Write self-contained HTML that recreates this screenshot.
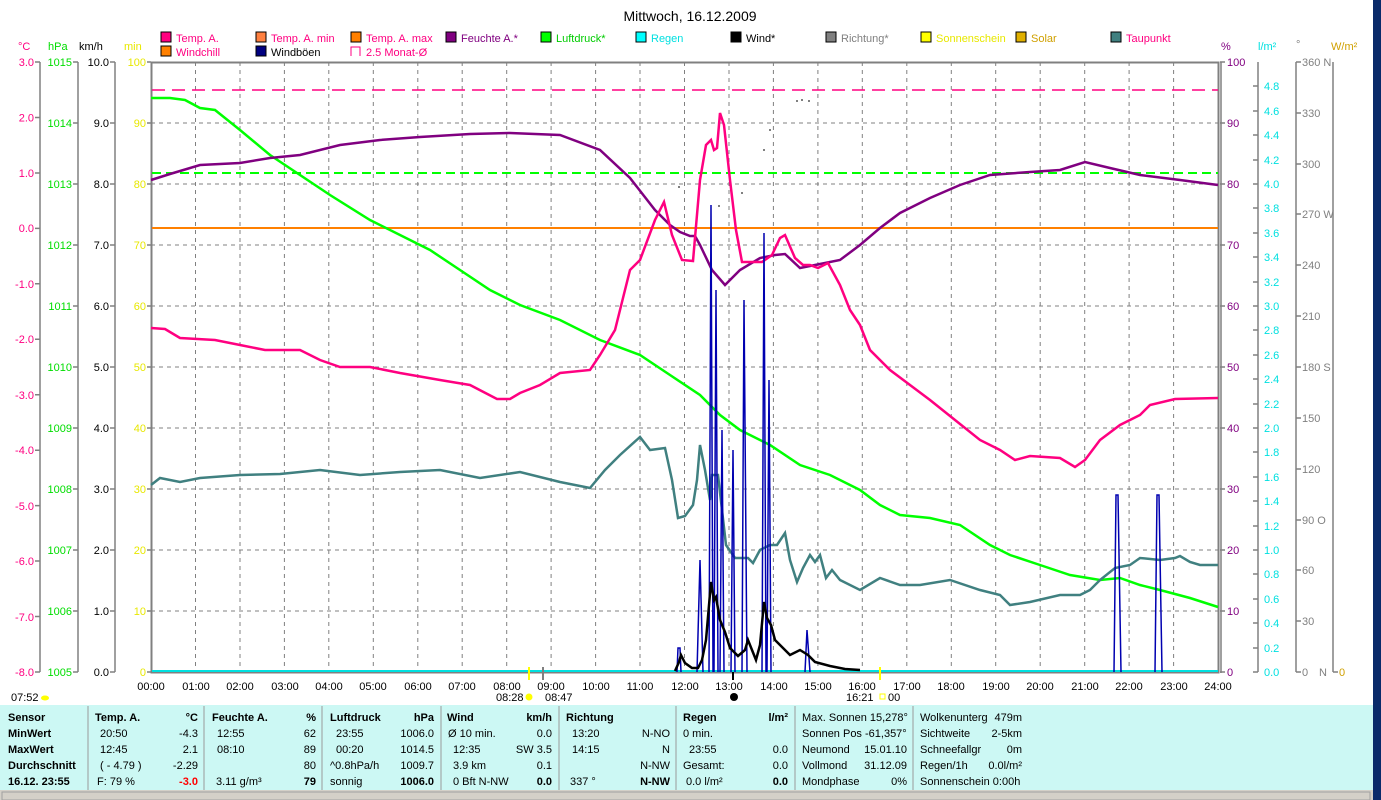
<!DOCTYPE html>
<html><head><meta charset="utf-8"><style>
body{margin:0;width:1381px;height:800px;overflow:hidden;background:#fff;font-family:"Liberation Sans",sans-serif;}
svg text{font-family:"Liberation Sans",sans-serif;}
</style></head><body>
<svg width="1381" height="800" xmlns="http://www.w3.org/2000/svg" style="position:absolute;left:0;top:0">
<rect width="1381" height="800" fill="#fff"/>
<rect x="1373" y="0" width="8" height="800" fill="#0a2a6a"/>
<text x="690" y="21" font-size="14" text-anchor="middle" fill="#000">Mittwoch, 16.12.2009</text>

<g font-size="11">
<rect x="161" y="32" width="10" height="10" fill="#ff0080" stroke="#000"/><text x="176" y="42" fill="#ff0080">Temp. A.</text>
<rect x="256" y="32" width="10" height="10" fill="#ff8040" stroke="#000"/><text x="271" y="42" fill="#ff0080">Temp. A. min</text>
<rect x="351" y="32" width="10" height="10" fill="#ff8000" stroke="#000"/><text x="366" y="42" fill="#ff0080">Temp. A. max</text>
<rect x="446" y="32" width="10" height="10" fill="#800080" stroke="#000"/><text x="461" y="42" fill="#800080">Feuchte A.*</text>
<rect x="541" y="32" width="10" height="10" fill="#00ff00" stroke="#000"/><text x="556" y="42" fill="#00cc00">Luftdruck*</text>
<rect x="636" y="32" width="10" height="10" fill="#00ffff" stroke="#000"/><text x="651" y="42" fill="#00e0e0">Regen</text>
<rect x="731" y="32" width="10" height="10" fill="#000" stroke="#000"/><text x="746" y="42" fill="#000">Wind*</text>
<rect x="826" y="32" width="10" height="10" fill="#808080" stroke="#000"/><text x="841" y="42" fill="#808080">Richtung*</text>
<rect x="921" y="32" width="10" height="10" fill="#ffff00" stroke="#000"/><text x="936" y="42" fill="#e8e800">Sonnenschein</text>
<rect x="1016" y="32" width="10" height="10" fill="#e0b000" stroke="#000"/><text x="1031" y="42" fill="#d0a000">Solar</text>
<rect x="1111" y="32" width="10" height="10" fill="#408080" stroke="#000"/><text x="1126" y="42" fill="#ff0080">Taupunkt</text>
<rect x="161" y="46" width="10" height="10" fill="#ff8000" stroke="#000"/><text x="176" y="56" fill="#ff0080">Windchill</text>
<rect x="256" y="46" width="10" height="10" fill="#000080" stroke="#000"/><text x="271" y="56" fill="#000">Windböen</text>
<path d="M351 56V47H360V56" fill="none" stroke="#ff0080"/><text x="366" y="56" fill="#ff0080">2.5 Monat-Ø</text>
</g>

<g font-size="11">
<text x="18" y="50" fill="#ff0080">°C</text>
<text x="48" y="50" fill="#00dd00">hPa</text>
<text x="79" y="50" fill="#000">km/h</text>
<text x="124" y="50" fill="#e8e800">min</text>
<text x="1221" y="50" fill="#800080">%</text>
<text x="1258" y="50" fill="#00e0e0">l/m²</text>
<text x="1296" y="48" fill="#808080">°</text>
<text x="1331" y="50" fill="#d0a000">W/m²</text>
</g>

<g stroke="#808080" stroke-width="1.5">
<line x1="40" y1="62" x2="40" y2="672"/>
<line x1="78" y1="62" x2="78" y2="672"/>
<line x1="115" y1="62" x2="115" y2="672"/>
<line x1="1258" y1="62" x2="1258" y2="672"/>
<line x1="1296" y1="62" x2="1296" y2="672"/>
<line x1="1333" y1="62" x2="1333" y2="672"/>
</g>
<g stroke="#808080" stroke-width="1.5">
<path d="M35 62h5M35 117.5h5M35 173h5M35 228.4h5M35 283.8h5M35 339.3h5M35 394.7h5M35 450.2h5M35 505.6h5M35 561h5M35 616.5h5M35 672h5"/>
<path d="M73 62h5M73 123h5M73 184h5M73 245h5M73 306h5M73 367h5M73 428h5M73 489h5M73 550h5M73 611h5M73 672h5"/>
<path d="M110 62h5M110 123h5M110 184h5M110 245h5M110 306h5M110 367h5M110 428h5M110 489h5M110 550h5M110 611h5M110 672h5"/>
<path d="M147 62h4M147 123h4M147 184h4M147 245h4M147 306h4M147 367h4M147 428h4M147 489h4M147 550h4M147 611h4M147 672h4"/>
<path d="M1220 62h5M1220 123h5M1220 184h5M1220 245h5M1220 306h5M1220 367h5M1220 428h5M1220 489h5M1220 550h5M1220 611h5M1220 672h5"/>
<path d="M1253 86h5M1253 111h5M1253 135h5M1253 160h5M1253 184h5M1253 208h5M1253 233h5M1253 257h5M1253 282h5M1253 306h5M1253 330h5M1253 355h5M1253 379h5M1253 404h5M1253 428h5M1253 452h5M1253 477h5M1253 501h5M1253 526h5M1253 550h5M1253 574h5M1253 599h5M1253 623h5M1253 648h5M1253 672h5"/>
<path d="M1296 62h5M1296 113h5M1296 164h5M1296 214h5M1296 265h5M1296 316h5M1296 367h5M1296 418h5M1296 469h5M1296 520h5M1296 570h5M1296 621h5M1296 672h5"/>
<path d="M1333 672h5"/>
</g>
<g font-size="11" text-anchor="end">
<g fill="#ff0080"><text x="34" y="66">3.0</text><text x="34" y="121.5">2.0</text><text x="34" y="177">1.0</text><text x="34" y="232">0.0</text><text x="34" y="288">-1.0</text><text x="34" y="343">-2.0</text><text x="34" y="399">-3.0</text><text x="34" y="454">-4.0</text><text x="34" y="510">-5.0</text><text x="34" y="565">-6.0</text><text x="34" y="621">-7.0</text><text x="34" y="676">-8.0</text></g>
<g fill="#00dd00"><text x="72" y="66">1015</text><text x="72" y="127">1014</text><text x="72" y="188">1013</text><text x="72" y="249">1012</text><text x="72" y="310">1011</text><text x="72" y="371">1010</text><text x="72" y="432">1009</text><text x="72" y="493">1008</text><text x="72" y="554">1007</text><text x="72" y="615">1006</text><text x="72" y="676">1005</text></g>
<g fill="#000"><text x="109" y="66">10.0</text><text x="109" y="127">9.0</text><text x="109" y="188">8.0</text><text x="109" y="249">7.0</text><text x="109" y="310">6.0</text><text x="109" y="371">5.0</text><text x="109" y="432">4.0</text><text x="109" y="493">3.0</text><text x="109" y="554">2.0</text><text x="109" y="615">1.0</text><text x="109" y="676">0.0</text></g>
<g fill="#e8e800"><text x="146" y="66">100</text><text x="146" y="127">90</text><text x="146" y="188">80</text><text x="146" y="249">70</text><text x="146" y="310">60</text><text x="146" y="371">50</text><text x="146" y="432">40</text><text x="146" y="493">30</text><text x="146" y="554">20</text><text x="146" y="615">10</text><text x="146" y="676">0</text></g>
</g>
<g font-size="11">
<g fill="#800080"><text x="1227" y="66">100</text><text x="1227" y="127">90</text><text x="1227" y="188">80</text><text x="1227" y="249">70</text><text x="1227" y="310">60</text><text x="1227" y="371">50</text><text x="1227" y="432">40</text><text x="1227" y="493">30</text><text x="1227" y="554">20</text><text x="1227" y="615">10</text><text x="1227" y="676">0</text></g>
<g fill="#00e0e0"><text x="1264" y="90">4.8</text><text x="1264" y="115">4.6</text><text x="1264" y="139">4.4</text><text x="1264" y="164">4.2</text><text x="1264" y="188">4.0</text><text x="1264" y="212">3.8</text><text x="1264" y="237">3.6</text><text x="1264" y="261">3.4</text><text x="1264" y="286">3.2</text><text x="1264" y="310">3.0</text><text x="1264" y="334">2.8</text><text x="1264" y="359">2.6</text><text x="1264" y="383">2.4</text><text x="1264" y="408">2.2</text><text x="1264" y="432">2.0</text><text x="1264" y="456">1.8</text><text x="1264" y="481">1.6</text><text x="1264" y="505">1.4</text><text x="1264" y="530">1.2</text><text x="1264" y="554">1.0</text><text x="1264" y="578">0.8</text><text x="1264" y="603">0.6</text><text x="1264" y="627">0.4</text><text x="1264" y="652">0.2</text><text x="1264" y="676">0.0</text></g>
<g fill="#808080"><text x="1302" y="66">360 N</text><text x="1302" y="117">330</text><text x="1302" y="168">300</text><text x="1302" y="218">270 W</text><text x="1302" y="269">240</text><text x="1302" y="320">210</text><text x="1302" y="371">180 S</text><text x="1302" y="422">150</text><text x="1302" y="473">120</text><text x="1302" y="524">90  O</text><text x="1302" y="574">60</text><text x="1302" y="625">30</text><text x="1302" y="676">0</text><text x="1319" y="676">N</text></g>
<text x="1339" y="676" fill="#d0a000">0</text>
</g>

<g stroke="#808080" stroke-dasharray="4,4" stroke-width="1">
<path d="M151 123H1218M151 184H1218M151 245H1218M151 306H1218M151 367H1218M151 428H1218M151 489H1218M151 550H1218M151 611H1218"/>
<path d="M195.5 62V672M240 62V672M284.4 62V672M328.8 62V672M373.3 62V672M417.8 62V672M462.2 62V672M506.7 62V672M551.1 62V672M595.6 62V672M640 62V672M684.5 62V672M729 62V672M773.4 62V672M817.9 62V672M862.3 62V672M906.8 62V672M951.3 62V672M995.7 62V672M1040.2 62V672M1084.7 62V672M1129.1 62V672M1173.6 62V672"/>
</g>
<rect x="151.5" y="62.5" width="1067" height="610" fill="none" stroke="#808080" stroke-width="2"/>
<line x1="1221" y1="62" x2="1221" y2="673" stroke="#808080" stroke-width="1.5"/>

<line x1="152" y1="90" x2="1218" y2="90" stroke="#ff0080" stroke-width="1.5" stroke-dasharray="13,7"/>
<line x1="152" y1="173" x2="1218" y2="173" stroke="#00ff00" stroke-width="2" stroke-dasharray="9,5"/>
<line x1="152" y1="228" x2="1218" y2="228" stroke="#ff8000" stroke-width="2"/>

<g fill="#808080"><rect x="796" y="100" width="2" height="2"/><rect x="801" y="99" width="2" height="2"/><rect x="808" y="100" width="2" height="2"/><rect x="769" y="129" width="2" height="2"/><rect x="763" y="149" width="2" height="2"/><rect x="741" y="192" width="2" height="2"/><rect x="678" y="186" width="2" height="2"/><rect x="718" y="205" width="2" height="2"/></g>

<polyline fill="none" stroke="#00ff00" stroke-width="2.5" points="151,98 170,98 185,100 200,108 215,110 240,130 270,155 300,175 330,195 370,220 400,235 430,250 460,270 490,290 520,305 560,320 600,340 640,355 670,375 700,395 720,415 740,430 770,445 800,465 830,475 860,490 880,505 900,515 930,518 960,525 990,545 1010,555 1040,565 1070,575 1100,580 1120,578 1140,585 1160,590 1190,598 1218,607"/>
<polyline fill="none" stroke="#408080" stroke-width="2.5" points="151,485 160,478 180,482 200,478 240,475 280,474 320,470 360,475 400,472 440,470 480,478 520,472 560,482 590,488 605,470 620,455 640,437 650,450 665,448 672,480 678,518 685,516 693,505 697,480 700,445 705,470 710,500 712,475 718,475 726,545 735,558 748,558 753,563 760,550 770,545 777,545 785,533 790,560 797,582 803,568 810,555 815,562 820,555 826,578 832,570 840,580 860,590 880,578 900,585 920,585 950,580 980,590 1000,595 1010,605 1030,602 1060,595 1080,595 1090,590 1100,580 1115,568 1130,565 1140,558 1160,560 1175,558 1180,556 1190,562 1200,565 1218,565"/>
<polyline fill="none" stroke="#800080" stroke-width="2.5" points="151,180 170,174 200,165 240,163 270,158 300,155 340,145 380,140 420,137 470,134 510,133 560,135 600,150 630,178 655,210 670,225 680,232 690,236 695,236 700,245 712,270 725,285 740,270 760,258 775,255 785,254 800,268 820,264 840,260 860,245 880,228 900,213 930,198 960,185 990,175 1030,172 1060,170 1085,162 1110,168 1140,175 1180,180 1218,185"/>
<polyline fill="none" stroke="#ff0080" stroke-width="2.5" points="151,328 165,329 180,338 215,340 240,345 265,350 300,350 320,360 340,367 370,367 400,373 440,380 470,385 497,399 510,399 520,393 540,385 560,373 590,370 600,355 615,330 630,270 640,260 655,220 664,202 672,235 682,260 693,261 700,180 706,145 711,140 714,150 717,148 720,113 724,125 730,180 736,230 742,262 752,262 762,262 772,255 780,238 785,235 795,258 803,265 810,265 818,268 828,263 840,285 850,310 860,325 870,350 890,370 910,385 930,400 955,420 980,440 1000,450 1015,460 1030,456 1060,458 1075,467 1085,460 1100,440 1120,425 1140,415 1150,405 1175,399 1218,398"/>
<line x1="152" y1="671" x2="1218" y2="671" stroke="#00e0e0" stroke-width="2"/>
<g fill="none" stroke="#0000b0" stroke-width="1.5">
<path d="M677 672L678 648L680 648L681 672"/>
<path d="M697 672L700 560L703 672"/>
<path d="M709 672L711 205L713 672M714 672L716 290L718 672"/>
<path d="M720 672L722 430L724 672"/>
<path d="M731 672L733 450L735 672"/>
<path d="M742 672L744 300L747 672"/>
<path d="M762 672L764 233L766 672M767 672L769 380L771 672"/>
<path d="M805 672L807 630L810 672"/>
<path d="M1114 672L1116 495L1118 495L1121 672"/>
<path d="M1155 672L1157 495L1159 495L1162 672"/>
</g>
<polyline fill="none" stroke="#000" stroke-width="2.5" points="675,671 679,662 681,655 685,663 692,668 698,668 702,660 706,640 711,582 714,600 716,597 720,620 725,632 730,648 738,656 745,650 748,640 752,650 756,660 760,645 764,602 767,618 771,625 775,640 780,645 790,655 800,650 808,655 815,662 830,666 845,669 860,670"/>

<g font-size="11" text-anchor="middle" fill="#000">
<text x="151" y="690">00:00</text><text x="196" y="690">01:00</text><text x="240" y="690">02:00</text><text x="285" y="690">03:00</text><text x="329" y="690">04:00</text><text x="373" y="690">05:00</text><text x="418" y="690">06:00</text><text x="462" y="690">07:00</text><text x="507" y="690">08:00</text><text x="551" y="690">09:00</text><text x="596" y="690">10:00</text><text x="640" y="690">11:00</text><text x="685" y="690">12:00</text><text x="729" y="690">13:00</text><text x="774" y="690">14:00</text><text x="818" y="690">15:00</text><text x="862" y="690">16:00</text><text x="907" y="690">17:00</text><text x="951" y="690">18:00</text><text x="996" y="690">19:00</text><text x="1040" y="690">20:00</text><text x="1085" y="690">21:00</text><text x="1129" y="690">22:00</text><text x="1174" y="690">23:00</text><text x="1218" y="690">24:00</text>
</g>
<g stroke-width="2"><line x1="529" y1="667" x2="529" y2="680" stroke="#ffff00"/><line x1="543" y1="667" x2="543" y2="680" stroke="#808080"/><line x1="880" y1="667" x2="880" y2="680" stroke="#ffff00"/><line x1="733" y1="672" x2="733" y2="680" stroke="#000"/></g>
<g font-size="11" fill="#000">
<text x="11" y="701">07:52</text><ellipse cx="45" cy="698" rx="4" ry="2.5" fill="#ffff00"/>
<text x="496" y="701">08:28</text><circle cx="529" cy="697" r="3.5" fill="#ffff00"/>
<text x="545" y="701">08:47</text>
<circle cx="734" cy="697" r="4" fill="#000"/>
<text x="846" y="701">16:21</text><rect x="880" y="694" width="5" height="5" fill="none" stroke="#ffff00"/><text x="888" y="701">00</text>
</g>

<rect x="0" y="705" width="1373" height="85" fill="#ccf8f4"/>
<rect x="0" y="790" width="1373" height="10" fill="#d4d0c8"/>
<rect x="2" y="792" width="1368" height="8" fill="none" stroke="#a0a0a0"/>
<g stroke="#9a9a9a"><path d="M88 706V790M204 706V790M322 706V790M441 706V790M559 706V790M676 706V790M795 706V790M913 706V790"/></g>
<g font-size="11" fill="#000">
<g font-weight="bold"><text x="8" y="721">Sensor</text><text x="8" y="737">MinWert</text><text x="8" y="753">MaxWert</text><text x="8" y="769">Durchschnitt</text><text x="8" y="785">16.12. 23:55</text>
<text x="95" y="721">Temp. A.</text><text x="212" y="721">Feuchte A.</text><text x="330" y="721">Luftdruck</text><text x="447" y="721">Wind</text><text x="566" y="721">Richtung</text><text x="683" y="721">Regen</text></g>
<text x="100" y="737">20:50</text><text x="100" y="753">12:45</text><text x="100" y="769">( - 4.79 )</text><text x="97" y="785">F: 79 %</text>
<text x="217" y="737">12:55</text><text x="217" y="753">08:10</text><text x="216" y="785">3.11 g/m³</text>
<text x="336" y="737">23:55</text><text x="336" y="753">00:20</text><text x="330" y="769">^0.8hPa/h</text><text x="330" y="785">sonnig</text>
<text x="448" y="737">Ø 10 min.</text><text x="453" y="753">12:35</text><text x="453" y="769">3.9 km</text><text x="453" y="785">0 Bft N-NW</text>
<text x="572" y="737">13:20</text><text x="572" y="753">14:15</text><text x="570" y="785">337 °</text>
<text x="683" y="737">0 min.</text><text x="689" y="753">23:55</text><text x="683" y="769">Gesamt:</text><text x="686" y="785">0.0 l/m²</text>
<text x="802" y="721">Max. Sonnen 15,278°</text><text x="802" y="737">Sonnen Pos  -61,357°</text><text x="802" y="753">Neumond</text><text x="802" y="769">Vollmond</text><text x="802" y="785">Mondphase</text>
<text x="920" y="721">Wolkenunterg</text><text x="920" y="737">Sichtweite</text><text x="920" y="753">Schneefallgr</text><text x="920" y="769">Regen/1h</text><text x="920" y="785">Sonnenschein  0:00h</text>
<g text-anchor="end">
<text x="198" y="721" font-weight="bold">°C</text><text x="198" y="737">-4.3</text><text x="198" y="753">2.1</text><text x="198" y="769">-2.29</text><text x="198" y="785" fill="#ff0000" font-weight="bold">-3.0</text>
<text x="316" y="721" font-weight="bold">%</text><text x="316" y="737">62</text><text x="316" y="753">89</text><text x="316" y="769">80</text><text x="316" y="785" font-weight="bold">79</text>
<text x="434" y="721" font-weight="bold">hPa</text><text x="434" y="737">1006.0</text><text x="434" y="753">1014.5</text><text x="434" y="769">1009.7</text><text x="434" y="785" font-weight="bold">1006.0</text>
<text x="552" y="721" font-weight="bold">km/h</text><text x="552" y="737">0.0</text><text x="552" y="753">SW 3.5</text><text x="552" y="769">0.1</text><text x="552" y="785" font-weight="bold">0.0</text>
<text x="670" y="737">N-NO</text><text x="670" y="753">N</text><text x="670" y="769">N-NW</text><text x="670" y="785" font-weight="bold">N-NW</text>
<text x="788" y="721" font-weight="bold">l/m²</text><text x="788" y="753">0.0</text><text x="788" y="769">0.0</text><text x="788" y="785" font-weight="bold">0.0</text>
<text x="907" y="753">15.01.10</text><text x="907" y="769">31.12.09</text><text x="907" y="785">0%</text>
<text x="1022" y="721">479m</text><text x="1022" y="737">2-5km</text><text x="1022" y="753">0m</text><text x="1022" y="769">0.0l/m²</text>
</g>
</g>
</svg>
</body></html>
